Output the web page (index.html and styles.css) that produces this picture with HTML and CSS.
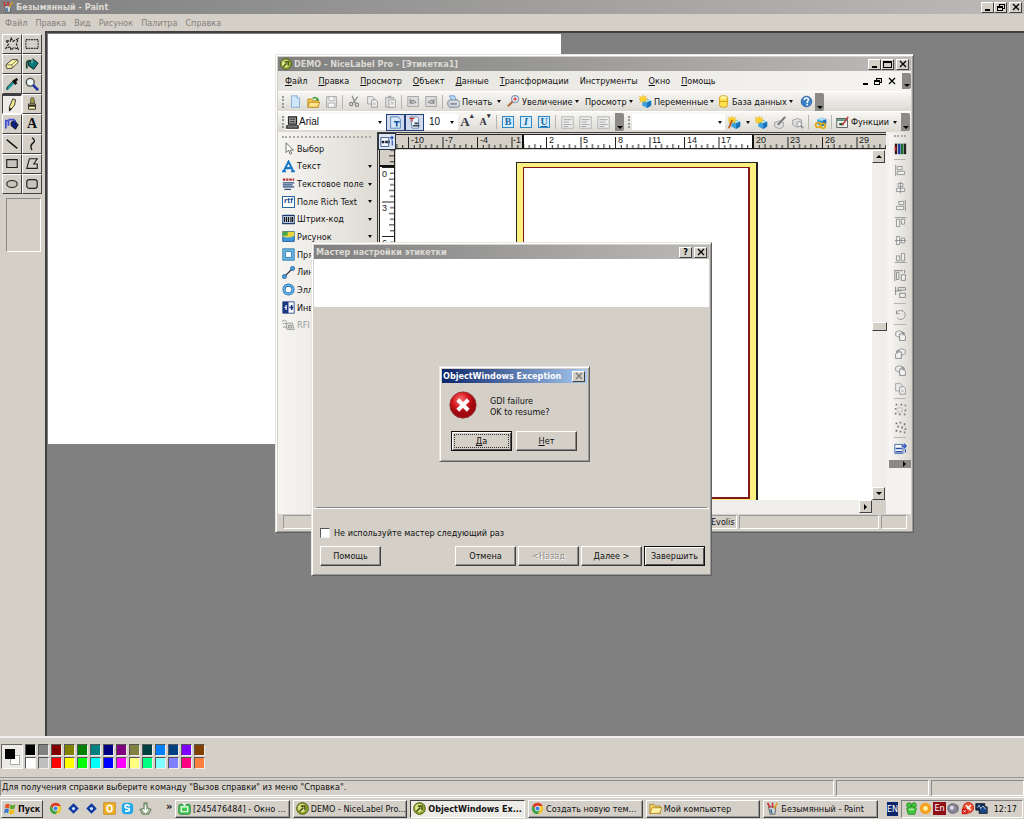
FILE: index.html
```html
<!DOCTYPE html>
<html lang="ru">
<head>
<meta charset="utf-8">
<title>Безымянный - Paint</title>
<link rel="stylesheet" href="styles.css">
</head>
<body>
<svg class="defs" aria-hidden="true">
  <symbol id="paint" viewBox="0 0 16 16"><path d="M3 6h9l-1 9H5z" fill="#c8d4d8" stroke="#555"/><path d="M5 7 2 1M8 7V1" stroke="#c33" stroke-width="2"/><path d="M10 8l4-7" stroke="#e0a020" stroke-width="2"/><path d="M6 9l1 5" stroke="#369" stroke-width="2"/></symbol>
  <symbol id="nice" viewBox="0 0 16 16"><circle cx="8" cy="8" r="7.3" fill="#8ca02c" stroke="#4d5a18"/><circle cx="7.500" cy="7.500" r="5" fill="#dbe68a"/><path d="M4 12 9 7M6 5h5v5" fill="none" stroke="#4d5a18" stroke-width="2"/></symbol>
  <symbol id="cube" viewBox="0 0 16 16"><path d="M4 7l6-2 5 2v6l-5 3-6-3z" fill="#3aa0e0"/><path d="M4 7l6-2 5 2-5 2z" fill="#a8ddf8"/><path d="M10 9l5-2v6l-5 3z" fill="#1a72b8"/></symbol>
  <symbol id="star" viewBox="0 0 16 16"><path d="M5 0l1 3 3-2-1 3 3 1-3 1 1 3-3-2-1 3-1-3-3 2 1-3-3-1 3-1-2-3 3 2z" fill="#ffd428" stroke="#e0a000" stroke-width=".4"/></symbol>
  <symbol id="chrome" viewBox="0 0 16 16"><circle cx="8" cy="8" r="7" fill="#f2c52c"/><path d="M2 4.500A7 7 0 0 1 14.500 5H8L5 8z" fill="#dc3b2c"/><path d="M2 4.500A7 7 0 0 0 8 15l3-5-5 0z" fill="#38a048"/><circle cx="8" cy="8" r="3" fill="#4080e0" stroke="#fff"/></symbol>
  <symbol id="doc" viewBox="0 0 16 16"><path d="M3 1h7l3 3v11H3z" fill="#cfe6fb" stroke="#79a4d0"/><path d="M10 1v3h3" fill="#fff" stroke="#79a4d0"/></symbol>
  <symbol id="copies" viewBox="0 0 16 16"><path d="M2 2h6l2 2v7H2z" fill="#ececec" stroke="#999"/><path d="M7 6h5l2 2v7H7z" fill="#f4f4f4" stroke="#888"/><path d="M9 10h3M9 12h3" stroke="#aaa"/></symbol>
  <symbol id="rotate" viewBox="0 0 16 16"><path d="M3 3v4h4M3 7a5.500 5.500 0 1 1 1 5" fill="none" stroke="#888" stroke-width="1.200" stroke-dasharray="3 .6"/></symbol>
  <symbol id="lines" viewBox="0 0 16 16"><rect x="1" y="1" width="14" height="14" fill="#eee" stroke="#aaa"/><path d="M3 4.500h10M3 7.500h7M3 10.500h10M3 13h6" stroke="#999"/></symbol>
  <symbol id="alignside" viewBox="0 0 16 16"><path d="M2 1v14M4 3h6v4H4zM4 9h9v4H4z" fill="#eee" stroke="#888"/></symbol>
  <symbol id="alignmid" viewBox="0 0 16 16"><path d="M8 1v14M5 3h6v4H5zM3 9h10v4H3z" fill="#eee" stroke="#888"/></symbol>
  <symbol id="order" viewBox="0 0 16 16"><path d="M2 4l5-2 4 3-3 6-6-3z" fill="#eee" stroke="#888"/><path d="M7 6h5l2 3v5H7z" fill="#f4f4f4" stroke="#777"/><path d="M9 3l4 2-2 3" fill="none" stroke="#777"/></symbol>
</svg>

<main class="paint">
  <header class="titlebar">
    <svg class="ico"><use href="#paint"/></svg><h1>Безымянный - Paint</h1>
    <div class="winbtns"><button class="wb" aria-label="Свернуть"><i class="g-min"></i></button><button class="wb" aria-label="Восстановить"><i class="g-rest"></i></button><button class="wb gap" aria-label="Закрыть"><svg viewBox="0 0 8 8"><path d="M1 1l6 6M7 1 1 7"/></svg></button></div>
  </header>
  <nav class="pmenu"><a href="#">Файл</a><a href="#">Правка</a><a href="#">Вид</a><a href="#">Рисунок</a><a href="#">Палитра</a><a href="#">Справка</a></nav>
  <section class="work">
    <aside class="toolbox">
      <div class="tools">
        <button aria-label="Произвольная область"><svg viewBox="0 0 16 16"><path d="M7 1l2 4 6-3-2 6 2 6-5-2-3 3-1-4-5 2 3-5-3-4 5 1z" fill="none" stroke="#222" stroke-width="1.300" stroke-dasharray="3 1.200"/></svg></button>
        <button aria-label="Выделение"><svg viewBox="0 0 16 16"><path d="M1 3h14v10H1z" fill="none" stroke="#222" stroke-width="1.200" stroke-dasharray="2 1"/></svg></button>
        <button aria-label="Ластик"><svg viewBox="0 0 16 16"><path d="M1 9l7-6h6l1 3-7 7H2z" fill="#fff8a0" stroke="#333"/><path d="M2 9h6l6-6M8 9v4" fill="none" stroke="#665"/></svg></button>
        <button aria-label="Заливка"><svg viewBox="0 0 16 16"><path d="M4 6l5-4 6 5-5 7-6-4z" fill="#087878" stroke="#111"/><path d="M2 13V6q2-3 5-1" fill="none" stroke="#143" stroke-width="2"/><path d="M8 2v5" stroke="#ddd"/></svg></button>
        <button aria-label="Пипетка"><svg viewBox="0 0 16 16"><path d="M2 14l8-8" stroke="#18a0a0" stroke-width="3"/><path d="M2 15l1-4 6-6" fill="none" stroke="#333"/><path d="M9 4l4 4M10 6l4-4" stroke="#111" stroke-width="3"/></svg></button>
        <button aria-label="Масштаб"><svg viewBox="0 0 16 16"><circle cx="6" cy="6" r="4.500" fill="#e8f4f4" stroke="#444" stroke-width="1.500"/><path d="M9 9l6 6" stroke="#2030a0" stroke-width="3"/></svg></button>
        <button class="on" aria-label="Карандаш"><svg viewBox="0 0 16 16"><path d="M9 1l3 1-1 6-5 6-1 1 0-5z" fill="#f4e890" stroke="#222"/><path d="M5 11v4l3-3z" fill="#111"/></svg></button>
        <button aria-label="Кисть"><svg viewBox="0 0 16 16"><path d="M7 1h3l1 6H6z" fill="#a8a040" stroke="#554"/><path d="M4 8h8v6H4z" fill="#eee8a0" stroke="#222"/><path d="M4 10h8" stroke="#222" stroke-width="2"/></svg></button>
        <button aria-label="Распылитель"><svg viewBox="0 0 16 16"><path d="M7 6l4-2 4 5-3 5-5-4z" fill="#102080" stroke="#111"/><path d="M1 13V4h3v6M4 3h6l2 2" fill="none" stroke="#4050d0" stroke-width="2"/></svg></button>
        <button class="letter" aria-label="Надпись">A</button>
        <button aria-label="Линия"><svg viewBox="0 0 16 16"><path d="M2 3l12 10" stroke="#111" stroke-width="1.500"/></svg></button>
        <button aria-label="Кривая"><svg viewBox="0 0 16 16"><path d="M8 1q5 3 1 6t-1 8" fill="none" stroke="#111" stroke-width="1.500"/></svg></button>
        <button aria-label="Прямоугольник"><svg viewBox="0 0 16 16"><path d="M2 3h12v9H2z" fill="#c8c4bc" stroke="#222" stroke-width="1.300"/></svg></button>
        <button aria-label="Многоугольник"><svg viewBox="0 0 16 16"><path d="M5 2h9l-4 6h4v5H2z" fill="none" stroke="#222" stroke-width="1.300"/></svg></button>
        <button aria-label="Эллипс"><svg viewBox="0 0 16 16"><ellipse cx="8" cy="8" rx="6" ry="4" fill="#c8c4bc" stroke="#222" stroke-width="1.300"/></svg></button>
        <button aria-label="Скругленный прямоугольник"><svg viewBox="0 0 16 16"><rect x="2" y="3" width="12" height="10" rx="3" fill="#c8c4bc" stroke="#222" stroke-width="1.300"/></svg></button>
      </div>
      <div class="toolopts"></div>
    </aside>
    <div class="canvas-area"><div class="sheet"></div></div>
  </section>
  <section class="palette">
    <div class="current"><i class="back"></i><i class="fore"></i></div>
    <div class="colors">
      <button class="c1" aria-label="Цвет 1"></button><button class="c2" aria-label="Цвет 2"></button><button class="c3" aria-label="Цвет 3"></button><button class="c4" aria-label="Цвет 4"></button><button class="c5" aria-label="Цвет 5"></button><button class="c6" aria-label="Цвет 6"></button><button class="c7" aria-label="Цвет 7"></button><button class="c8" aria-label="Цвет 8"></button><button class="c9" aria-label="Цвет 9"></button><button class="c10" aria-label="Цвет 10"></button><button class="c11" aria-label="Цвет 11"></button><button class="c12" aria-label="Цвет 12"></button><button class="c13" aria-label="Цвет 13"></button><button class="c14" aria-label="Цвет 14"></button>
      <button class="c15" aria-label="Цвет 15"></button><button class="c16" aria-label="Цвет 16"></button><button class="c17" aria-label="Цвет 17"></button><button class="c18" aria-label="Цвет 18"></button><button class="c19" aria-label="Цвет 19"></button><button class="c20" aria-label="Цвет 20"></button><button class="c21" aria-label="Цвет 21"></button><button class="c22" aria-label="Цвет 22"></button><button class="c23" aria-label="Цвет 23"></button><button class="c24" aria-label="Цвет 24"></button><button class="c25" aria-label="Цвет 25"></button><button class="c26" aria-label="Цвет 26"></button><button class="c27" aria-label="Цвет 27"></button><button class="c28" aria-label="Цвет 28"></button>
    </div>
  </section>
  <footer class="pstatus"><span class="grow">Для получения справки выберите команду "Вызов справки" из меню "Справка".</span><span></span><span></span></footer>
</main>

<section class="window nl">
  <header class="titlebar">
    <svg class="ico"><use href="#nice"/></svg><h2>DEMO - NiceLabel Pro - [Этикетка1]</h2>
    <div class="winbtns"><button class="wb" aria-label="Свернуть"><i class="g-min"></i></button><button class="wb" aria-label="Развернуть"><i class="g-max"></i></button><button class="wb gap" aria-label="Закрыть"><svg viewBox="0 0 8 8"><path d="M1 1l6 6M7 1 1 7"/></svg></button></div>
  </header>
  <nav class="nmenu"><a href="#"><u>Ф</u>айл</a><a href="#"><u>П</u>равка</a><a href="#"><u>П</u>росмотр</a><a href="#"><u>О</u>бъект</a><a href="#"><u>Д</u>анные</a><a href="#"><u>Т</u>рансформации</a><a href="#">Инструменты</a><a href="#"><u>О</u>кно</a><a href="#"><u>П</u>омощь</a>
    <div class="mdi"><i class="g-min"></i><i class="g-rest"></i><svg viewBox="0 0 8 8"><path d="M1 1l6 6M7 1 1 7"/></svg><b class="more"></b></div></nav>
  <div class="bar">
    <i class="grip"></i>
    <button class="tb" aria-label="Создать"><svg><use href="#doc"/></svg></button>
    <button class="tb" aria-label="Открыть"><svg viewBox="0 0 16 16"><path d="M1 5h5l1 2h7v8H1z" fill="#f5c848" stroke="#b8861c"/><path d="M3 9h13l-3 6H1z" fill="#ffe48c" stroke="#b8861c"/><path d="M6 4q4-4 7 0V2l2 5-5-1 2-1q-2-2-4 0z" fill="#38a030"/></svg></button>
    <button class="tb" aria-label="Сохранить"><svg viewBox="0 0 16 16"><path d="M2 2h12v13H2z" fill="#e8e8e8" stroke="#999"/><path d="M5 2h6v5H5zM4 10h8v5H4z" fill="#fafafa" stroke="#aaa"/></svg></button>
    <i class="sep"></i>
    <button class="tb" aria-label="Вырезать"><svg viewBox="0 0 16 16"><path d="M5 1l4 9M12 2l-6 8" stroke="#888" stroke-width="1.500"/><circle cx="4" cy="11" r="2" fill="none" stroke="#888" stroke-width="1.500"/><circle cx="11" cy="12" r="2" fill="none" stroke="#888" stroke-width="1.500"/></svg></button>
    <button class="tb" aria-label="Копировать"><svg><use href="#copies"/></svg></button>
    <button class="tb" aria-label="Вставить"><svg viewBox="0 0 16 16"><path d="M2 3h10v12H2z" fill="#ddd" stroke="#999"/><path d="M5 1h4v3H5z" fill="#aaa"/><path d="M6 6h8v9H6z" fill="#f5f5f5" stroke="#999"/><path d="M8 9h4M8 11h4" stroke="#aaa"/></svg></button>
    <i class="sep"></i>
    <button class="tb" aria-label="Отменить"><svg viewBox="0 0 16 16"><rect x="1" y="2" width="13" height="12" fill="#ddd" stroke="#999"/><path d="M4 5v5h5M4 9q4-5 7 1" fill="none" stroke="#888" stroke-width="1.500"/></svg></button>
    <button class="tb" aria-label="Вернуть"><svg viewBox="0 0 16 16"><rect x="1" y="2" width="13" height="12" fill="#ddd" stroke="#999"/><path d="M11 5v5H6M11 9Q7 4 4 10" fill="none" stroke="#888" stroke-width="1.500"/></svg></button>
    <i class="sep"></i>
    <button class="tb txt w-print"><svg viewBox="0 0 16 16"><path d="M3 1h6l3 6H6z" fill="#bfe0fb" stroke="#5a8cc0"/><path d="M1 8l3-2h9l3 3v4l-3 2H3l-2-3z" fill="#d4d8de" stroke="#678"/><path d="M4 11h8" stroke="#345"/></svg>Печать<i class="caret"></i></button>
    <button class="tb txt w-zoom"><svg viewBox="0 0 16 16"><circle cx="10" cy="5" r="4.300" fill="#eaf4ff" stroke="#8898b0" stroke-width="1.500"/><path d="M10 3v4M8 5h4" stroke="#e03020" stroke-width="1.500"/><path d="M7 8l-6 6" stroke="#b06840" stroke-width="2.500"/></svg>Увеличение<i class="caret"></i></button>
    <button class="tb txt w-view">Просмотр<i class="caret"></i></button>
    <button class="tb txt w-var"><svg viewBox="0 0 16 16"><use href="#cube"/><use href="#star"/></svg>Переменные<i class="caret"></i></button>
    <button class="tb txt w-db"><svg viewBox="0 0 16 16"><rect x="3" y="1" width="10" height="14" rx="3" fill="#ffdf50" stroke="#c89818"/><path d="M3 8h10" stroke="#c89818"/><ellipse cx="8" cy="3" rx="4" ry="1.500" fill="#fff4b0"/></svg>База данных<i class="caret"></i></button>
    <button class="tb" aria-label="Справка"><svg viewBox="0 0 16 16"><circle cx="8" cy="8" r="6.500" fill="#3a80c8" stroke="#20589c"/><path d="M5 6q1-3 4-2t0 4v2M9 11v2" fill="none" stroke="#fff" stroke-width="2"/></svg></button>
    <b class="more"></b>
  </div>
  <div class="bar">
    <i class="grip"></i>
    <label class="combo w-font"><svg viewBox="0 0 16 16"><path d="M3 1h10v9H3zM1 12h14v3H1z" fill="#999" stroke="#222" stroke-width="1.500"/><path d="M5 4h6M5 7h6" stroke="#222"/></svg><select aria-label="Шрифт"><option>Arial</option></select><i class="caret"></i></label>
    <button class="tb tog" aria-label="Масштаб текста"><svg viewBox="0 0 16 16"><path d="M2 1h9l3 3v11H2z" fill="#d8e8f8" stroke="#4878b0"/><path d="M6 7h7M9.500 7v6" stroke="#1050a0" stroke-width="2"/></svg></button><button class="tb tog" aria-label="Редактор текста"><svg viewBox="0 0 16 16"><path d="M3 1h8l2 2v12H5z" fill="#eef4fb" stroke="#5878a0"/><path d="M2 3h6M5 3v4" stroke="#c03030" stroke-width="1.500"/><path d="M6 12h8M8 9h5" stroke="#345" stroke-width="2"/></svg></button>
    <label class="combo w-size"><select aria-label="Размер"><option>10</option></select><i class="caret"></i></label>
    <button class="tb serif" aria-label="Увеличить шрифт">A<sup>▴</sup></button>
    <button class="tb serif small" aria-label="Уменьшить шрифт">A<sup>▾</sup></button>
    <i class="sep"></i>
    <button class="tb"><b class="fmt">B</b></button><button class="tb"><b class="fmt it">I</b></button><button class="tb"><b class="fmt un">U</b></button>
    <i class="sep"></i>
    <button class="tb" aria-label="По левому краю"><svg><use href="#lines"/></svg></button><button class="tb" aria-label="По центру"><svg><use href="#lines"/></svg></button><button class="tb" aria-label="По правому краю"><svg><use href="#lines"/></svg></button>
    <b class="more"></b>
    <i class="grip"></i>
    <label class="combo w-blank"><select aria-label="Переменная"><option></option></select><i class="caret"></i></label>
    <button class="tb wide" aria-label="Мастер"><svg viewBox="0 0 16 16"><use href="#cube"/><use href="#star"/><path d="M5 5L1 15" stroke="#c05020" stroke-width="2"/></svg><i class="caret"></i></button>
    <button class="tb" aria-label="Новая переменная"><svg viewBox="0 0 16 16"><use href="#cube"/><use href="#star"/></svg></button>
    <button class="tb" aria-label="Изменить"><svg viewBox="0 0 16 16"><path d="M2 8l6-2 5 2v5l-5 3-6-3z" fill="#ddd" stroke="#999"/><path d="M15 1L6 11" stroke="#777" stroke-width="2.500"/></svg></button>
    <button class="tb" aria-label="Поиск"><svg viewBox="0 0 16 16"><path d="M2 5l6-2 5 2v6l-5 3-6-3z" fill="#ddd" stroke="#999"/><circle cx="10" cy="10" r="3" fill="#eee" stroke="#888"/><path d="M12 12l3 3" stroke="#888" stroke-width="2"/></svg></button>
    <i class="sep"></i>
    <button class="tb" aria-label="Связи"><svg viewBox="0 0 16 16"><use href="#cube" y="-3"/><circle cx="5" cy="11" r="3" fill="none" stroke="#e0a810" stroke-width="2"/><circle cx="11" cy="12" r="3" fill="none" stroke="#e0a810" stroke-width="2"/></svg></button>
    <i class="sep"></i>
    <button class="tb txt w-fn"><svg viewBox="0 0 16 16"><rect x="1" y="3" width="13" height="11" fill="#f4f4f4" stroke="#444"/><path d="M1 5h13" stroke="#486" stroke-width="2"/><path d="M4 10h5" stroke="#353" stroke-width="3"/><path d="M15 1L8 11" stroke="#c04848" stroke-width="2"/></svg>Функции<i class="caret"></i></button>
    <b class="more"></b>
  </div>
  <div class="nbody">
    <ul class="objects">
      <li><button><svg viewBox="0 0 16 16"><path d="M5 1v12l3-3 2 5 2-1-2-4h4z" fill="#fff" stroke="#555"/></svg>Выбор</button></li>
      <li><button><svg viewBox="0 0 16 16"><path d="M2 14L8 2l6 12M5 10h6" fill="none" stroke="#1878c8" stroke-width="2.500"/><path d="M0 14h5M11 14h5" stroke="#1878c8" stroke-width="2"/></svg>Текст<i class="caret"></i></button></li>
      <li><button><svg viewBox="0 0 16 16"><path d="M1 2h14" stroke="#b03038" stroke-width="3" stroke-dasharray="3 1"/><path d="M1 6h14M1 8.500h12M1 11h14M3 14h8" stroke="#2c4c80" stroke-width="1.500"/></svg>Текстовое поле<i class="caret"></i></button></li>
      <li><button><b class="rtf">rtf</b>Поле Rich Text<i class="caret"></i></button></li>
      <li><button><svg viewBox="0 0 16 16"><rect x="0" y="3" width="16" height="10" rx="2" fill="#b8c8dc" stroke="#203c70" stroke-width="1.500"/><path d="M3 5v6M5.500 5v6M8 5v6M11 5v6M13 5v6" stroke="#111" stroke-width="1.400"/></svg>Штрих-код<i class="caret"></i></button></li>
      <li><button><svg viewBox="0 0 16 16"><rect x="1" y="2" width="14" height="12" fill="#3c98e0" stroke="#185090"/><path d="M1 2h14v5q-7 4-14 1z" fill="#e8d83c"/><path d="M1 2h6v5H1z" fill="#48a848"/></svg>Рисунок<i class="caret"></i></button></li>
      <li><button><svg viewBox="0 0 16 16"><rect x="1" y="1" width="14" height="14" fill="#6cb4e0" stroke="#2878b0"/><rect x="4.500" y="4.500" width="7" height="7" fill="#fff" stroke="#2878b0"/></svg>Пря</button></li>
      <li><button><svg viewBox="0 0 16 16"><path d="M3 13L13 3" stroke="#224" stroke-width="1.500"/><circle cx="3" cy="13" r="2.500" fill="#50a0e0" stroke="#205890"/><circle cx="13" cy="3" r="2.500" fill="#50a0e0" stroke="#205890"/></svg>Лин</button></li>
      <li><button><svg viewBox="0 0 16 16"><circle cx="8" cy="8" r="5.500" fill="#fff" stroke="#2070b0" stroke-width="4"/><circle cx="8" cy="8" r="5.500" fill="none" stroke="#70b8e8" stroke-width="2"/></svg>Элл</button></li>
      <li><button><svg viewBox="0 0 16 16"><path d="M1 1h14v14H1z" fill="#fff" stroke="#183880"/><path d="M1 1h7v14H1z" fill="#183880"/><path d="M3 8h3M5 5v6" stroke="#fff" stroke-width="1.500"/><path d="M9 8h5M12 5v6" stroke="#183880" stroke-width="2"/></svg>Инв</button></li>
      <li><button class="off"><svg viewBox="0 0 16 16"><path d="M5 5h8l2 8H6z" fill="#ddd" stroke="#999"/><path d="M0 3q3-3 6 0M1 6q2-2 5 0M1 10h5M8 8h4v3H8z" fill="none" stroke="#888"/></svg>RFI</button></li>
    </ul>
    <div class="view">
      <div class="corner"><svg viewBox="0 0 16 16"><path d="M1 3h9v10H1z" fill="#fff" stroke="#234a90"/><path d="M2 8h9" stroke="#123" stroke-width="3" stroke-dasharray="3 1"/><path d="M11 3h4M13 1l2 2-2 2M14 6v6" fill="none" stroke="#2850c0" stroke-width="1.300"/></svg></div>
      <svg class="hruler">
        <defs><pattern id="ht" x="12" width="34.500" height="14" patternUnits="userSpaceOnUse"><path d="M.5 2v12M6.250 10v4M12 9v5M17.750 10v4M23.500 9v5M29.250 10v4" stroke="#222"/></pattern></defs>
        <rect class="face" x="127" width="230" height="14"/><rect width="100%" height="14" fill="url(#ht)"/>
        <path d="M127 0v14M357 0v14" stroke="#111" stroke-width="2"/>
        <g class="num"><text x="15" y="8">-10</text><text x="49" y="8">-7</text><text x="84" y="8">-4</text><text x="117" y="8">-1</text><text x="153" y="8">2</text><text x="187" y="8">5</text><text x="222" y="8">8</text><text x="256" y="8">11</text><text x="291" y="8">14</text><text x="325" y="8">17</text><text x="360" y="8">20</text><text x="394" y="8">23</text><text x="429" y="8">26</text><text x="463" y="8">29</text></g>
      </svg>
      <svg class="vruler">
        <defs><pattern id="vt" y="17" width="14" height="34.500" patternUnits="userSpaceOnUse"><path d="M2 .5h12M10 6.250h4M9 12h5M10 17.750h4M9 23.500h5M10 29.250h4" stroke="#222"/></pattern></defs>
        <rect class="face" y="16" width="14" height="100%"/><rect width="14" height="100%" fill="url(#vt)"/><path d="M0 16h14" stroke="#111" stroke-width="2"/>
        <g class="num"><text x="2" y="27">0</text><text x="2" y="61">3</text><text x="2" y="96">6</text></g>
      </svg>
      <div class="page-area"><div class="label"><div class="inner"></div></div></div>
      <div class="vscroll"><button aria-label="Вверх"><i class="up"></i></button><span></span><button aria-label="Вниз"><i class="down"></i></button></div>
      <div class="hscroll"><button aria-label="Вправо"><i class="right"></i></button></div>
    </div>
    <div class="side">
      <i class="hgrip"></i>
      <button aria-label="Цвета"><svg viewBox="0 0 16 16"><path d="M2.500 2v13" stroke="#311" stroke-width="3"/><path d="M6.500 2v13" stroke="#1838a0" stroke-width="3"/><path d="M10 2v13" stroke="#187030" stroke-width="3"/><path d="M13.500 2v13" stroke="#222" stroke-width="3"/><path d="M2 6v5" stroke="#c02020" stroke-width="2"/></svg></button>
      <i class="hsep"></i>
      <button aria-label="Влево"><svg><use href="#alignside"/></svg></button>
      <button aria-label="По центру"><svg><use href="#alignmid"/></svg></button>
      <button aria-label="Вправо"><svg class="flip"><use href="#alignside"/></svg></button>
      <button aria-label="По верху"><svg class="r90"><use href="#alignside"/></svg></button>
      <button aria-label="По середине"><svg class="r90"><use href="#alignmid"/></svg></button>
      <button aria-label="По низу"><svg class="r270"><use href="#alignside"/></svg></button>
      <button aria-label="Распределить по горизонтали"><svg viewBox="0 0 16 16"><path d="M1 1v14M1 2h10M3 4h3v9H3zM9 7h5v7H9zM13 1v4" fill="#eee" stroke="#777"/></svg></button>
      <button aria-label="Распределить по вертикали"><svg viewBox="0 0 16 16"><path d="M2 1v10M1 6h8M5 2h9v3H5zM7 9h7v5H7z" fill="#eee" stroke="#777"/></svg></button>
      <i class="hsep"></i>
      <button aria-label="Повернуть"><svg><use href="#rotate"/></svg></button>
      <i class="hsep"></i>
      <button aria-label="Вперёд"><svg><use href="#order"/></svg></button>
      <button aria-label="На передний план"><svg class="flip"><use href="#order"/></svg></button>
      <button aria-label="Назад"><svg><use href="#order"/></svg></button>
      <button aria-label="На задний план"><svg><use href="#copies"/></svg></button>
      <i class="hsep"></i>
      <button aria-label="Группировать"><svg viewBox="0 0 16 16"><path d="M2 2h12v12H2z" fill="none" stroke="#777" stroke-width="2" stroke-dasharray="2 4"/><path d="M4 6h6v5H4z" fill="none" stroke="#bbb"/></svg></button>
      <button aria-label="Разгруппировать"><svg viewBox="0 0 16 16"><path d="M2 3h2M7 2h2M12 4h2M4 7h2M9 8h2M13 10h2M2 12h2M7 13h2M12 14h2" fill="none" stroke="#777" stroke-width="2.200"/></svg></button>
      <i class="hsep"></i>
      <button aria-label="Свойства"><svg viewBox="0 0 16 16"><path d="M1 3h10v11H1z" fill="#fff" stroke="#2850a0"/><path d="M2 8h8M2 12h8" stroke="#2850a0" stroke-width="2"/><path d="M9 5h6M12 2l3 3-3 3M14 9v4" fill="none" stroke="#2850c0" stroke-width="1.500"/></svg></button>
      <b class="sidemore"><i class="right"></i></b>
    </div>
  </div>
  <footer class="nstatus"><span class="grow"></span><span class="evolis">Evolis</span><span class="mid"></span><span class="end"></span></footer>
</section>

<section class="window wizard">
  <header class="titlebar"><h2>Мастер настройки этикетки</h2><div class="winbtns"><button class="wb">?</button><button class="wb gap" aria-label="Закрыть"><svg viewBox="0 0 8 8"><path d="M1 1l6 6M7 1 1 7"/></svg></button></div></header>
  <div class="banner"></div>
  <div class="wpage"></div>
  <footer class="wfoot">
    <label><input type="checkbox">Не используйте мастер следующий раз</label>
    <div class="wbtns"><button class="btn">Помощь</button><button class="btn first">Отмена</button><button class="btn" disabled>&lt;Назад</button><button class="btn">Далее &gt;</button><button class="btn default">Завершить</button></div>
  </footer>
</section>

<section class="window alert" role="alertdialog" aria-label="ObjectWindows Exception">
  <header class="titlebar active"><h2>ObjectWindows Exception</h2><div class="winbtns"><button class="wb dim" aria-label="Закрыть"><svg viewBox="0 0 8 8"><path d="M1 1l6 6M7 1 1 7"/></svg></button></div></header>
  <div class="msg"><svg viewBox="0 0 32 32"><defs><radialGradient id="red" cx=".4" cy=".3"><stop offset="0" stop-color="#f87878"/><stop offset=".6" stop-color="#d81820"/><stop offset="1" stop-color="#a00810"/></radialGradient></defs><circle cx="16" cy="16" r="15" fill="url(#red)" stroke="#8c3030"/><path d="M10 10l12 12M22 10L10 22" stroke="#fff" stroke-width="4.500"/></svg><p>GDI failure<br>OK to resume?</p></div>
  <div class="abtns"><button class="btn default focus"><span><u>Д</u>а</span></button><button class="btn"><span><u>Н</u>ет</span></button></div>
</section>

<footer class="taskbar">
  <button class="start"><svg viewBox="0 0 16 16"><path d="M2 3q3-2 5 0L6 8Q4 6 1 8z" fill="#e85020"/><path d="M8 3q3 2 6 0l-1 5q-3 2-6 0z" fill="#60a830"/><path d="M1 9q3-2 5 0l-1 5q-2-2-5 0z" fill="#3878d0"/><path d="M7 9q3 2 6 0l-1 5q-3 2-6 0z" fill="#f0c020"/></svg>Пуск</button>
  <nav class="quick">
    <a href="#" aria-label="Chrome"><svg><use href="#chrome"/></svg></a>
    <a href="#" aria-label="TeamViewer"><svg viewBox="0 0 16 16"><path d="M8 3l5 5-5 5-5-5z" fill="#1038a0" stroke="#1038a0" stroke-width="2"/><circle cx="8" cy="8" r="2" fill="#cfe0ff"/></svg></a>
    <a href="#" aria-label="Служба"><svg viewBox="0 0 16 16"><path d="M8 3l5 5-5 5-5-5z" fill="#1038a0" stroke="#1038a0" stroke-width="2"/><circle cx="8" cy="8" r="2" fill="#cfe0ff"/></svg></a>
    <a href="#" aria-label="Outlook"><svg viewBox="0 0 16 16"><rect x="1" y="1" width="14" height="14" fill="#f4b428" stroke="#c08010"/><ellipse cx="8" cy="8" rx="3" ry="4" fill="none" stroke="#fff" stroke-width="2"/></svg></a>
    <a href="#" aria-label="Skype"><svg viewBox="0 0 16 16"><rect x="1" y="1" width="14" height="14" rx="5" fill="#20a8e8"/><path d="M11 5q-5-3-6 0t5 3q2 4-5 3" fill="none" stroke="#fff" stroke-width="2"/></svg></a>
    <a href="#" aria-label="Устройства"><svg viewBox="0 0 16 16"><path d="M6 1h4v6l5 2-3 6H4L1 9l5-1z" fill="#a0b898" stroke="#587050"/><path d="M8 4v8M5 9l3 4 3-4" fill="none" stroke="#fff" stroke-width="1.500"/></svg></a>
    <b>»</b>
  </nav>
  <div class="tasks">
    <button><svg viewBox="0 0 16 16"><rect x="1" y="3" width="14" height="12" rx="2" fill="#40c850" stroke="#187828"/><path d="M4 6h8v6H4zM6 1l2 3 2-3" fill="none" stroke="#fff" stroke-width="1.500"/></svg><span>[245476484] - Окно ...</span></button>
    <button><svg><use href="#nice"/></svg><span>DEMO - NiceLabel Pro...</span></button>
    <button class="on"><svg><use href="#nice"/></svg><span>ObjectWindows Ex...</span></button>
    <button><svg><use href="#chrome"/></svg><span>Создать новую тем...</span></button>
    <button><svg viewBox="0 0 16 16"><path d="M1 3h5l1 2h7v9H1z" fill="#f5d468" stroke="#a88020"/><path d="M4 7h12l-3 7H1z" fill="#fff0a8" stroke="#a88020"/></svg><span>Мой компьютер</span></button>
    <button><svg><use href="#paint"/></svg><span>Безымянный - Paint</span></button>
  </div>
  <span class="lang">EN</span>
  <div class="tray">
    <svg viewBox="0 0 16 16"><circle cx="5" cy="4" r="3" fill="#48c840" stroke="#208020"/><circle cx="11" cy="4" r="3" fill="#48c840" stroke="#208020"/><path d="M2 8q6-5 12 0l-2 7H4z" fill="#48c840" stroke="#208020"/><path d="M5 9h6" stroke="#fff"/></svg>
    <svg viewBox="0 0 16 16"><circle cx="8" cy="8" r="7" fill="#f8a020"/><circle cx="8" cy="8" r="3" fill="#fff0a0"/></svg>
    <span class="en">En</span>
    <svg viewBox="0 0 16 16"><circle cx="7" cy="8" r="6" fill="#889" stroke="#556"/><circle cx="6" cy="7" r="2.500" fill="#dde"/><path d="M12 3q4 5 0 10" fill="none" stroke="#667"/></svg>
    <svg viewBox="0 0 16 16"><circle cx="9" cy="7" r="6.500" fill="#f05030" stroke="#b82018"/><path d="M6 4l6 6M12 4l-6 6" stroke="#fff" stroke-width="2"/><path d="M1 8h7v7H1z" fill="#d01010"/><path d="M3 10l3 3M6 10l-3 3" stroke="#fff"/></svg>
    <svg viewBox="0 0 16 16"><path d="M1 2h11v8H1z" fill="#103068" stroke="#111"/><path d="M5 6h10v8H5z" fill="#184888" stroke="#111"/><path d="M3 7l2-3 2 4 3-3 3 4" fill="none" stroke="#d8f0ff"/></svg>
    <time>12:17</time>
  </div>
</footer>
</body>
</html>
```
FILE: styles.css
```css
* { box-sizing: border-box; }
html, body { height: 100%; margin: 0; }
body {
  display: flex; flex-direction: column; overflow: hidden; position: relative;
  background: #d4d0c8; color: #111;
  font: 9px/12px "DejaVu Sans Condensed", "DejaVu Sans", sans-serif;
}
button, input, select { font: inherit; color: inherit; margin: 0; padding: 0; border: 0; background: none; border-radius: 0; }
button { display: flex; align-items: center; white-space: nowrap; }
a { color: inherit; text-decoration: none; }
h1, h2, p, ul { margin: 0; padding: 0; font-size: inherit; }
ul { list-style: none; }
svg { display: block; flex: none; }
i { font-style: normal; }
.defs { position: absolute; width: 0; height: 0; }
.grow { flex: 1; }

/* title bars */
.titlebar { display: flex; align-items: center; height: 14px; padding: 0 2px; gap: 2px; background: linear-gradient(90deg, #808080, #bcbab8); color: #dedbd4; white-space: nowrap; }
.titlebar h1, .titlebar h2 { flex: 1; font-weight: bold; }
.titlebar.active { background: linear-gradient(90deg, #0c246a, #a6caf0); color: #fff; }
.titlebar .ico { width: 12px; height: 12px; }
.winbtns { display: flex; }
.wb { width: 13px; height: 11px; justify-content: center; background: #d4d0c8; color: #000; border: 1px solid; border-color: #fff #404040 #404040 #fff; font-weight: bold; }
.wb.gap { margin-left: 2px; }
.wb svg, .mdi svg { width: 8px; height: 8px; stroke: #000; stroke-width: 1.3; }
.wb.dim svg { stroke: #777; }
.g-min { width: 5px; height: 2px; margin-top: 5px; background: #000; }
.g-max { width: 9px; height: 7px; border: 1px solid #000; border-top-width: 2px; }
.g-rest { width: 6px; height: 5px; border: 1px solid #000; border-top-width: 2px; margin: 2px 2px 0 0; box-shadow: 2px -2px 0 -1px #d4d0c8, 2px -2px 0 0 #000; }

/* Paint */
.paint { flex: 1; min-height: 0; display: flex; flex-direction: column; }
.pmenu { display: flex; gap: 8px; height: 17px; padding: 3px 5px; color: #84817a; }
.work { flex: 1; min-height: 0; display: flex; }
.toolbox { width: 45px; padding: 3px 2px; }
.tools { display: grid; grid-template-columns: 20px 20px; grid-auto-rows: 20px; }
.tools button { justify-content: center; border: 1px solid; border-color: #fff #404040 #404040 #fff; }
.tools .on { border-color: #404040 #fff #fff #404040; background: #edebe6; border-top-width: 2px; }
.tools svg { width: 14px; height: 14px; }
.tools .letter { font: bold 14px/14px "Liberation Serif", serif; }
.toolopts { width: 35px; height: 54px; margin: 4px 0 0 4px; border: 1px solid; border-color: #888 #fff #fff #888; }
.canvas-area { flex: 1; border: solid #404040; border-width: 2px 0 0 2px; background: #808080; padding: 1px; }
.sheet { width: 513px; height: 410px; background: #fff; }
.palette { display: flex; gap: 2px; height: 41px; padding: 6px 1px; border-top: 2px solid #f0eeea; }
.current { width: 22px; height: 25px; display: grid; background: #eceae6; border: 1px solid; border-color: #666 #fff #fff #666; }
.current i { grid-area: 1 / 1; width: 10px; height: 10px; }
.current .back { margin: 10px 0 0 8px; background: #fff; border: 1px solid #aaa; }
.current .fore { margin: 4px 0 0 3px; background: #000; }
.colors { display: grid; grid-template-columns: repeat(14, 11px); grid-auto-rows: 12px; gap: 1px 2px; }
.colors button { border: 1px solid #555; border-right-color: #eee; border-bottom-color: #eee; }
.c1 { background: #000; } .c2 { background: #808080; } .c3 { background: #800000; } .c4 { background: #808000; }
.c5 { background: #008000; } .c6 { background: #008080; } .c7 { background: #000080; } .c8 { background: #800080; }
.c9 { background: #808040; } .c10 { background: #004040; } .c11 { background: #0080ff; } .c12 { background: #004080; }
.c13 { background: #8000ff; } .c14 { background: #804000; } .c15 { background: #fff; } .c16 { background: #c0c0c0; }
.c17 { background: #f00; } .c18 { background: #ff0; } .c19 { background: #0f0; } .c20 { background: #0ff; }
.c21 { background: #00f; } .c22 { background: #f0f; } .c23 { background: #ffff80; } .c24 { background: #00ff80; }
.c25 { background: #80ffff; } .c26 { background: #8080ff; } .c27 { background: #ff0080; } .c28 { background: #ff8040; }
.pstatus { display: flex; gap: 2px; height: 20px; padding: 2px 0 1px; border-top: 1px solid #999; }
.pstatus span { width: 93px; padding: 0 1px; border: 1px solid; border-color: #888 #fff #fff #888; }
.pstatus .grow { width: auto; }

/* window frames on the desktop */
.window { position: absolute; display: flex; flex-direction: column; padding: 2px; background: #d4d0c8; border: 1px solid; border-color: #e8e6e0 #606060 #606060 #e8e6e0; box-shadow: inset 1px 1px #fff, inset -1px -1px #999; }
.nl { left: 275px; top: 54px; width: 639px; height: 479px; }
.wizard { left: 311px; top: 242px; width: 401px; height: 334px; }
.alert { left: 439px; top: 366px; width: 151px; height: 96px; }

/* NiceLabel */
.nmenu { display: flex; align-items: center; gap: 11px; height: 20px; padding-left: 7px; background: linear-gradient(90deg, #e4e2dc, #f5f4f1); }
.mdi { display: flex; align-items: center; gap: 6px; margin-left: auto; }
.mdi .more { height: 16px; margin-left: 0; }
.mdi .g-min { margin-top: 6px; }
.bar { display: flex; align-items: center; height: 20px; border-top: 1px solid #fff; background: linear-gradient(#f8f7f4, #dcd9d2); }
.bar:nth-of-type(2) { height: 21px; }
.grip { width: 2px; height: 12px; margin: 0 2px 0 4px; border-left: 2px dotted #999; }
.sep { width: 1px; height: 14px; margin: 0 2px; background: #b8b5ae; }
.tb { width: 18px; height: 18px; justify-content: center; flex: none; }
.tb svg { width: 13px; height: 13px; }
.txt { justify-content: flex-start; gap: 2px; padding-left: 2px; }
.txt .caret { margin-left: auto; margin-right: 4px; }
.w-print { width: 60px; } .w-zoom { width: 78px; } .w-view { width: 54px; } .w-var { width: 78px; } .w-db { width: 82px; } .w-fn { width: 67px; }
.wide { width: 27px; gap: 5px; }
.caret { border: solid transparent; border-width: 3px 2px 0; border-top-color: #111; flex: none; }
.more { width: 9px; height: 18px; margin-left: 3px; background: #8c8a86; display: flex; align-items: flex-end; justify-content: center; border-radius: 0 2px 2px 0; flex: none; }
.more::after { content: ""; border: solid transparent; border-width: 3px 3px 0; border-top-color: #000; margin-bottom: 2px; }
.bar .more:last-child { margin-left: 0; }
.combo { display: flex; align-items: center; height: 16px; background: #fff; }
.combo svg { width: 13px; height: 13px; }
.combo select { flex: 1; min-width: 0; appearance: none; font: 10px/14px "Liberation Sans", sans-serif; }
.w-font { width: 100px; padding-right: 4px; }
.w-size { width: 34px; padding: 0 4px 0 5px; }
.w-blank { width: 93px; padding-right: 3px; }
.tog { background: #d0daec; border: 1px solid #24407c; width: 19px; height: 17px; }
.serif { font: bold 13px/14px "Liberation Serif", serif; color: #334; }
.serif.small { font-size: 10px; }
.serif sup { font-size: 7px; line-height: 7px; align-self: flex-start; }
.fmt { width: 12px; height: 12px; border: 1px solid #2c88c8; background: #d4ecfc; color: #1868a8; font: bold 10px/10px "Liberation Serif", serif; text-align: center; }
.it { font-style: italic; } .un { text-decoration: underline; }
.nbody { flex: 1; min-height: 0; display: flex; background: #f3f2ee; }
.objects { width: 99px; padding: 4px 0 180px 4px; background: linear-gradient(90deg, #f6f5f2, #dedbd4); display: grid; grid-template-rows: 4px; grid-auto-rows: minmax(0, 1fr); }
.objects::before { content: ""; border-top: 2px dotted #aaa; margin-right: 6px; }
.objects button { width: 100%; height: 100%; gap: 2px; }
.objects svg { width: 13px; height: 13px; }
.objects .caret { margin: 0 5px 0 auto; }
.rtf { width: 13px; height: 12px; border: 1px solid #2868a8; background: #fff; color: #18488c; font: bold 7px/9px "DejaVu Sans Condensed", sans-serif; text-align: center; }
.objects .off { color: #999; }
.view { flex: 1; display: grid; grid-template: 17px minmax(0, 1fr) 14px / 18px minmax(0, 1fr) 14px; background: #d4d0c8; border: solid #404040; border-width: 1px 0 0 1px; }
.corner { padding: 1px; background: #dfe4ee; border: 1px solid #234; }
.corner svg { width: 14px; height: 14px; }
.hruler { grid-column: 2 / 4; width: 100%; height: 15px; background: #d4d0c8; border-top: 1px solid #222; border-bottom: 1px solid #222; margin-top: 1px; }
.vruler { width: 16px; height: 100%; grid-row: 2 / 4; background: #d4d0c8; border: solid #222; border-width: 0 1px; margin-left: 1px; }
.face { fill: #fff; }
.num { font: 9px "Liberation Sans", sans-serif; fill: #222; }
.page-area { background: #fff; padding: 12px 0 0 120px; display: flex; overflow: hidden; }
.label { width: 242px; padding: 4px 6px 1px; background: #fbf080; border: 1px solid #222; border-bottom: 0; border-right-width: 2px; }
.inner { height: 100%; background: #fff; border: 1px solid #801818; border-bottom-width: 2px; border-right-width: 2px; }
.vscroll { display: flex; flex-direction: column; align-items: stretch; background: #f0eeea; }
.vscroll button, .hscroll button { width: 13px; height: 13px; justify-content: center; background: #d4d0c8; border: 1px solid; border-color: #fff #404040 #404040 #fff; }
.vscroll span { flex: 1; min-height: 0; }
.vscroll span::before { content: ""; display: block; width: 13px; height: 7px; margin-top: 159px; background: #d4d0c8; border: 1px solid; border-color: #fff #404040 #404040 #fff; }
.hscroll { grid-column: 2; display: flex; justify-content: flex-end; background: #f0eeea; }
.up { border: solid transparent; border-width: 0 3px 3px; border-bottom-color: #000; }
.down { border: solid transparent; border-width: 3px 3px 0; border-top-color: #000; }
.right { border: solid transparent; border-width: 3px 0 3px 3px; border-left-color: #000; }
.side { width: 22px; margin-left: 3px; background: linear-gradient(90deg, #f8f7f4, #dcd9d2); display: flex; flex-direction: column; align-items: center; align-self: flex-start; padding-top: 3px; }
.side button { width: 18px; height: 17px; justify-content: center; margin-bottom: 1px; }
.side button:nth-of-type(even) { height: 16px; }
.side svg { width: 13px; height: 13px; }
.hgrip { width: 12px; border-top: 2px dotted #aaa; margin-bottom: 3px; }
.hsep { width: 12px; height: 1px; margin: 1px 0 2px; background: #b8b5ae; }
.flip { transform: scaleX(-1); } .r90 { transform: rotate(90deg); } .r270 { transform: rotate(270deg); }
.sidemore { align-self: stretch; height: 8px; margin-top: 2px; background: #8c8a86; display: flex; align-items: center; justify-content: flex-end; padding-right: 5px; }
.nstatus { display: flex; gap: 2px; height: 16px; padding: 1px 4px 1px 5px; }
.nstatus span { border: 1px solid; border-color: #999 #fff #fff #999; }
.nstatus .evolis { width: 29px; padding: 0 2px; line-height: 12px; }
.nstatus .mid { width: 140px; } .nstatus .end { width: 26px; }

/* wizard */
.banner { height: 48px; background: #fff; }
.wpage { flex: 1; margin: 0 2px; border-bottom: 1px solid #888; }
.wfoot { height: 65px; padding: 18px 4px 0 6px; border-top: 1px solid #fff; }
.wfoot label { display: flex; align-items: center; gap: 4px; }
.wfoot input { appearance: none; width: 10px; height: 10px; background: #fff; border: 1px solid; border-color: #555 #eee #eee #555; }
.wbtns { display: flex; gap: 2px; margin-top: 7px; }
.wbtns .first { margin-left: auto; }
.btn { width: 61px; height: 20px; justify-content: center; border: 1px solid; border-color: #fff #404040 #404040 #fff; box-shadow: inset -1px -1px #888; background: #d4d0c8; }
.btn:disabled { color: #928f88; text-shadow: 1px 1px #fff; }
.btn.default { border-color: #111; box-shadow: inset 1px 1px #fff, inset -1px -1px #555; }

/* exception alert */
.alert .titlebar { padding-left: 1px; }
.msg { display: flex; gap: 13px; padding: 8px 7px 0; }
.msg svg { width: 28px; height: 28px; }
.msg p { padding-top: 5px; line-height: 11px; }
.abtns { display: flex; gap: 4px; padding-left: 9px; margin-top: 12px; }
.focus span { flex: 1; margin: 2px; border: 1px dotted #333; }

/* taskbar */
.taskbar { display: flex; align-items: center; height: 22px; padding: 0 1px; border-top: 1px solid #fff; }
.start { width: 42px; height: 18px; gap: 1px; padding-left: 2px; font-weight: bold; border: 1px solid; border-color: #fff #404040 #404040 #fff; }
.taskbar svg { width: 13px; height: 13px; }
.quick { display: flex; align-items: center; gap: 5px; padding-left: 6px; width: 132px; }
.quick b { margin: 0 0 4px 9px; font-size: 11px; }
.tasks { flex: 1; min-width: 0; display: flex; gap: 3px; }
.tasks button { flex: 1 1 0; min-width: 0; height: 18px; gap: 2px; padding-left: 2px; overflow: hidden; border: 1px solid; border-color: #fff #404040 #404040 #fff; box-shadow: inset -1px -1px #999; }
.tasks .on { border-color: #404040 #fff #fff #404040; background: #ecebe7; box-shadow: none; font-weight: bold; }
.lang { margin: 0 3px 0 9px; width: 11px; height: 14px; line-height: 14px; overflow: hidden; background: #0c246a; color: #fff; }
.tray { display: flex; align-items: center; gap: 1px; width: 122px; height: 18px; padding: 0 5px 0 3px; border: 1px solid; border-color: #808080 #fff #fff #808080; }
.tray .en { width: 13px; height: 13px; background: #901018; color: #fff; text-align: center; }
.tray time { margin-left: auto; }
```
